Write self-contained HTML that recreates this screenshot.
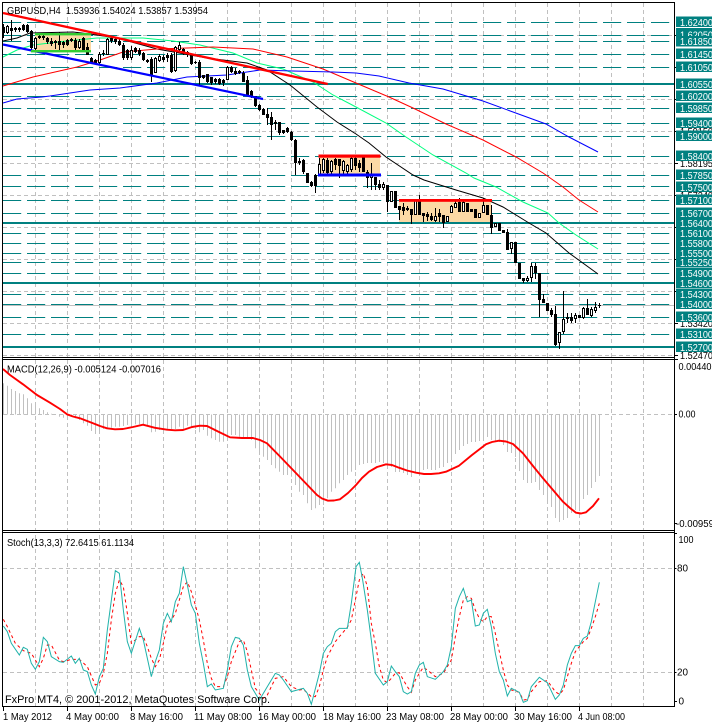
<!DOCTYPE html>
<html><head><meta charset="utf-8"><style>
html,body{margin:0;padding:0;background:#fff;width:712px;height:724px;overflow:hidden}
svg{display:block;filter:blur(.25px)}
text{font-family:"Liberation Sans",sans-serif;font-size:10px;fill:#000}
</style></head><body>
<svg xmlns="http://www.w3.org/2000/svg" width="712" height="724" viewBox="0 0 712 724">
<rect width="712" height="724" fill="#fff"/>
<!-- grid -->
<path fill="none" stroke="#c0c0c0" stroke-width="1" stroke-dasharray="4 3" d="M35.5 3V707M67.5 3V707M99.5 3V707M131.5 3V707M163.5 3V707M195.5 3V707M227.5 3V707M259.5 3V707M291.5 3V707M323.5 3V707M355.5 3V707M387.5 3V707M419.5 3V707M451.5 3V707M483.5 3V707M515.5 3V707M547.5 3V707M579.5 3V707M611.5 3V707M643.5 3V707M3 35.5H674M3 99.5H674M3 131.5H674M3 163.5H674M3 195.5H674M3 227.5H674M3 259.5H674M3 291.5H674M3 323.5H674M3 355.5H674M3 414.5H674M3 568.5H674M3 672.5H674"/>
<path d="M3 305.5H674" stroke="#c0c0c0" stroke-width="1"/>
<!-- levels -->
<path fill="none" stroke="#008080" stroke-width="1" stroke-dasharray="18.2 5.8" d="M3 22.5H670M3 35.5H670M3 41.5H670M3 54.5H670M3 67.5H670M3 96.5H670M3 108.5H670M3 123.5H670M3 136.5H670M3 156.5H670M3 175.5H670M3 186.5H670M3 200.5H670M3 213.5H670M3 233.5H670M3 243.5H670M3 253.5H670M3 262.5H670M3 273.5H670M3 294.5H670M3 304.5H670M3 317.5H670M3 334.5H670"/>
<path stroke="#008080" stroke-width="2" d="M3 84H674M3 223H674M3 283H674M3 347H674"/>
<!-- zones -->
<rect x="35" y="35" width="56" height="16" fill="#fbd9a5"/>
<rect x="319" y="157" width="61" height="17" fill="#fbd9a5"/>
<rect x="399" y="201" width="92" height="21" fill="#fbd9a5"/>
<!-- moving averages -->
<g fill="none" stroke-width="1">
<polyline stroke="#000" points="3,41 17,38 30,33 73,32 90,34 117,38 157,49 207,58 247,63 267,70 290,85 317,107 337,122 356,134 369,143 386,157 413,175 424,180 456,190 483,198 503,207 529,223 546,233 569,253 598,274"/>
<polyline stroke="#00ff7f" points="3,57 17,50 33,45 67,41 97,38 143,38 173,41 200,45 233,53 257,63 283,69 313,82 333,95 356,107 386,123 406,137 433,155 466,173 474,178 496,187 523,202 548,213 559,223 576,235 598,249"/>
<polyline stroke="#f00" points="3,86 33,77 77,67 100,60 123,52 157,49 187,48 213,47 253,49 287,57 323,69 356,83 363,86 389,97 413,108 446,124 483,140 516,157 543,173 563,187 579,200 598,212"/>
<polyline stroke="#00f" points="3,103 17,99 42,97 50,96 90,90 120,88 157,83 187,77 227,75 260,70 293,71 333,72 356,73 379,76 409,83 443,89 483,101 513,112 546,124 569,137 598,152"/>
</g>
<!-- candles: wicks -->
<path fill="none" stroke="#000" stroke-width="1" d="M3.5 24V38M7.5 25V34M11.5 20V41M15.5 27V32M19.5 27V32M23.5 24V31M27.5 24V33M31.5 30V52M35.5 37V50M39.5 35V39M43.5 35V40M47.5 37V44M51.5 38V46M55.5 40V49M59.5 32V50M63.5 41V48M67.5 39V46M71.5 38V42M75.5 38V50M79.5 39V49M83.5 37V52M87.5 43V55M91.5 57V64M95.5 59V64M99.5 52V64M103.5 50V56M107.5 38V55M111.5 37V43M115.5 38V44M119.5 39V46M123.5 43V60M127.5 49V60M131.5 46V60M135.5 47V53M139.5 48V56M143.5 52V61M147.5 59V63M151.5 57V82M155.5 57V73M159.5 54V62M163.5 55V62M167.5 53V62M171.5 53V73M175.5 46V72M179.5 42V52M183.5 48V55M187.5 51V57M191.5 54V65M195.5 61V64M199.5 60V85M203.5 75V79M207.5 74V83M211.5 77V85M215.5 78V84M219.5 78V85M223.5 79V86M227.5 66V80M231.5 66V73M235.5 68V75M239.5 70V74M243.5 71V82M247.5 76V95M251.5 90V98M255.5 96V107M259.5 104V111M263.5 108V115M267.5 108V125M271.5 112V140M275.5 120V130M279.5 122V135M283.5 130V134M287.5 127V133M291.5 131V141M295.5 139V175M299.5 158V165M303.5 159V174M307.5 173V183M311.5 181V187M315.5 174V193M319.5 158V176M323.5 158V173M327.5 158V175M331.5 160V176M335.5 158V170M339.5 159V178M343.5 160V175M347.5 164V176M351.5 157V172M355.5 157V170M359.5 160V172M363.5 155V172M367.5 170V188M371.5 163V190M375.5 177V190M379.5 180V190M383.5 182V190M387.5 185V212M391.5 191V202M395.5 191V208M399.5 206V220M403.5 203V215M407.5 206V211M411.5 209V224M415.5 199V215M419.5 195V215M423.5 213V222M427.5 212V221M431.5 213V221M435.5 208V222M439.5 209V222M443.5 215V228M447.5 216V222M451.5 205V213M455.5 199V208M459.5 198V212M463.5 199V212M467.5 203V212M471.5 209V212M475.5 209V218M479.5 213V218M483.5 198V213M487.5 205V215M491.5 205V234M495.5 223V227M499.5 223V231M503.5 230V233M507.5 229V250M511.5 242V254M515.5 242V263M519.5 263V279M523.5 278V283M527.5 276V282M531.5 263V282M535.5 263V279M539.5 273V317M543.5 294V303M547.5 303V311M551.5 308V317M555.5 306V346M559.5 332V349M563.5 291V334M567.5 313V323M571.5 313V323M575.5 313V323M579.5 315V318M583.5 307V319M587.5 299V315M591.5 307V317M595.5 302V313M599.5 303V308"/>
<!-- candles: bodies -->
<path fill="none" stroke="#000" stroke-width="3" d="M3.5 27V33M7.5 26V33M11.5 28V31M15.5 28V30M19.5 28V30M23.5 25V30M27.5 25V32M31.5 31V48M35.5 38V49M39.5 36V38M43.5 36V38M47.5 38V42M51.5 41V44M55.5 41V43M59.5 41V45M63.5 42V45M67.5 40V45M71.5 39V41M75.5 40V48M79.5 41V48M83.5 38V51M87.5 47V55M91.5 58V63M95.5 60V63M99.5 54V63M103.5 53V54M107.5 39V55M111.5 38V41M115.5 39V42M119.5 41V45M123.5 45V58M127.5 50V58M131.5 50V58M135.5 48V52M139.5 50V54M143.5 53V60M147.5 60V62M151.5 59V75M155.5 58V73M159.5 56V61M163.5 57V60M167.5 55V58M171.5 55V72M175.5 47V71M179.5 45V50M183.5 49V54M187.5 52V55M191.5 55V64M195.5 62V63M199.5 62V78M203.5 75V78M207.5 74V82M211.5 77V83M215.5 79V82M219.5 79V84M223.5 80V83M227.5 67V80M231.5 67V72M235.5 71V74M239.5 71V73M243.5 73V82M247.5 80V95M251.5 91V97M255.5 96V106M259.5 105V110M263.5 109V115M267.5 114V118M271.5 117V125M275.5 122V124M279.5 122V133M283.5 130V133M287.5 128V132M291.5 132V140M295.5 140V163M299.5 161V163M303.5 160V172M307.5 173V183M311.5 182V186M315.5 175V186M319.5 164V175M323.5 159V171M327.5 160V173M331.5 161V172M335.5 159V165M339.5 159V166M343.5 161V171M347.5 165V172M351.5 158V170M355.5 158V166M359.5 163V168M363.5 155V172M367.5 172V178M371.5 174V178M375.5 177V185M379.5 184V188M383.5 184V188M387.5 185V202M391.5 191V202M395.5 191V208M399.5 206V210M403.5 207V211M407.5 208V210M411.5 209V215M415.5 199V215M419.5 199V215M423.5 213V216M427.5 214V217M431.5 216V220M435.5 216V221M439.5 213V217M443.5 215V223M447.5 216V222M451.5 206V213M455.5 203V208M459.5 202V212M463.5 202V212M467.5 203V212M471.5 209V212M475.5 209V218M479.5 213V218M483.5 205V213M487.5 205V215M491.5 215V228M495.5 223V227M499.5 223V231M503.5 230V233M507.5 232V250M511.5 242V249M515.5 242V263M519.5 263V279M523.5 278V281M527.5 278V281M531.5 266V278M535.5 266V273M539.5 273V300M543.5 299V303M547.5 303V311M551.5 310V315M555.5 314V345M559.5 332V343M563.5 319V332M567.5 317V319M571.5 317V321M575.5 315V319M579.5 315V318M583.5 308V318M587.5 308V315M591.5 309V316M595.5 307V311M599.5 305V306"/>
<path fill="none" stroke="#fff" stroke-width="1" d="M7.5 27V32M35.5 39V48M79.5 42V47M99.5 55V62M107.5 40V54M131.5 51V57M155.5 59V72M159.5 57V60M175.5 48V70M179.5 46V49M227.5 68V79M319.5 165V174M323.5 160V170M331.5 162V171M343.5 162V170M347.5 166V171M351.5 159V169M371.5 175V177M383.5 185V187M391.5 192V201M415.5 200V214M435.5 217V220M447.5 217V221M451.5 207V212M455.5 204V207M463.5 203V211M479.5 214V217M483.5 206V212M495.5 224V226M511.5 243V248M527.5 279V280M531.5 267V277M559.5 333V342M563.5 320V331M575.5 316V318M583.5 309V317M591.5 310V315M595.5 308V310"/>
<!-- trend lines and zone borders -->
<path stroke="#f00" stroke-width="2.3" fill="none" d="M3 13L327.7 84"/>
<path stroke="#00f" stroke-width="2.2" fill="none" d="M3 44.5L263 99"/>
<rect x="35" y="33" width="56" height="2.4" fill="#32cd32"/>
<rect x="31" y="50" width="60" height="2.4" fill="#32cd32"/>
<rect x="318.5" y="154.5" width="62" height="3.2" fill="#f00"/>
<rect x="318" y="173.5" width="63" height="3" fill="#00f"/>
<rect x="399" y="199" width="93" height="2.8" fill="#f00"/>
<!-- MACD histogram -->
<path fill="none" stroke="#c0c0c0" stroke-width="1" d="M3.5 414.5V383.3M7.5 414.5V385.7M11.5 414.5V389M15.5 414.5V391M19.5 414.5V393.3M23.5 414.5V394.3M27.5 414.5V398.3M31.5 414.5V403.3M35.5 414.5V405M39.5 414.5V408.3M43.5 414.5V410M47.5 414.5V412.3M51.5 414.5V413.7M59.5 414.5V416.7M63.5 414.5V417.7M67.5 414.5V416.7M71.5 414.5V416.7M75.5 414.5V418.3M79.5 414.5V420M83.5 414.5V423.3M87.5 414.5V425.7M91.5 414.5V431M95.5 414.5V434M99.5 414.5V430M103.5 414.5V429M107.5 414.5V428.3M111.5 414.5V427.7M115.5 414.5V426.7M119.5 414.5V426.7M123.5 414.5V426M127.5 414.5V425M131.5 414.5V424.3M135.5 414.5V424.3M139.5 414.5V424.3M143.5 414.5V424M147.5 414.5V425.7M151.5 414.5V432.3M155.5 414.5V431.7M159.5 414.5V430M163.5 414.5V429M167.5 414.5V430M171.5 414.5V429M175.5 414.5V429M179.5 414.5V426.7M183.5 414.5V429M187.5 414.5V425.7M191.5 414.5V426.7M195.5 414.5V429M199.5 414.5V432.3M203.5 414.5V430M207.5 414.5V435.7M211.5 414.5V438.3M215.5 414.5V440M219.5 414.5V441.7M223.5 414.5V441.7M227.5 414.5V438.3M231.5 414.5V435M235.5 414.5V435M239.5 414.5V436.7M243.5 414.5V437.7M247.5 414.5V437.7M251.5 414.5V440M255.5 414.5V448.3M259.5 414.5V451.7M263.5 414.5V456.7M267.5 414.5V460M271.5 414.5V465M275.5 414.5V468.3M279.5 414.5V471.7M283.5 414.5V475M287.5 414.5V475M291.5 414.5V476.7M295.5 414.5V485M299.5 414.5V491.7M303.5 414.5V495M307.5 414.5V503.3M311.5 414.5V510M315.5 414.5V508.3M319.5 414.5V505M323.5 414.5V505M327.5 414.5V498.3M331.5 414.5V491.7M335.5 414.5V488.3M339.5 414.5V483.3M343.5 414.5V480M347.5 414.5V475M351.5 414.5V471.7M355.5 414.5V470M359.5 414.5V465M363.5 414.5V464M367.5 414.5V463M371.5 414.5V463M375.5 414.5V463M379.5 414.5V462M383.5 414.5V463M387.5 414.5V464M391.5 414.5V467M395.5 414.5V472M399.5 414.5V472M403.5 414.5V473M407.5 414.5V475M411.5 414.5V477M415.5 414.5V472M419.5 414.5V472M423.5 414.5V470M427.5 414.5V469M431.5 414.5V470M435.5 414.5V470M439.5 414.5V468M443.5 414.5V467M447.5 414.5V463M451.5 414.5V459M455.5 414.5V454M459.5 414.5V450M463.5 414.5V446M467.5 414.5V444M471.5 414.5V442M475.5 414.5V442M479.5 414.5V441M483.5 414.5V438M487.5 414.5V437M491.5 414.5V440M495.5 414.5V442M499.5 414.5V442M503.5 414.5V445M507.5 414.5V452M511.5 414.5V453M515.5 414.5V457M519.5 414.5V471M523.5 414.5V480M527.5 414.5V483M531.5 414.5V483M535.5 414.5V482M539.5 414.5V490M543.5 414.5V495M547.5 414.5V502M551.5 414.5V507M555.5 414.5V518M559.5 414.5V522M563.5 414.5V520M567.5 414.5V518M571.5 414.5V513M575.5 414.5V510M579.5 414.5V510M583.5 414.5V499M587.5 414.5V495M591.5 414.5V488M595.5 414.5V482M599.5 414.5V476"/>
<!-- MACD signal -->
<polyline fill="none" stroke="#f00" stroke-width="1.9" stroke-linejoin="round" points="3,369 10,375 23,384.3 37,395 50,402.7 60,409 67,414.3 73,416.5 80,418.3 93,423.3 100,426 107,428.3 115,429.3 123,429 133,427 143,424.7 155,427.8 167,429.7 175,430.3 183,430 192,427 200,425.7 207,426 218,431.5 230,437.3 242,438 253,438 260,440 267,443.3 280,456.5 293,470 305,482.5 317,495 322,498.5 328,500.7 334,500.5 340,499.3 348,493 356,485 362,478 369,471.7 377,467 386,464.3 392,465 399,467.7 407,470.5 416,472.7 424,474 431,474 439,473.3 446,471.7 459,465.7 472,455 486,444.3 492,442 499,440.7 506,441.5 513,444 523,453.3 533,466 543,478.3 553,490 563,501.7 570,508 576,512.7 581,513.5 586,512.3 593,506 599,498.3"/>
<!-- Stochastic -->
<g transform="translate(0,530) scale(.33333)" fill="none" stroke-width="3">
<polyline stroke="#f00" stroke-dasharray="9 9" points="10,268 22,290 46,340 70,362 94,370 106,390 118,410 130,385 142,345 154,345 178,390 190,395 214,388 238,388 262,410 286,465 298,460 310,430 322,370 334,270 346,190 358,150 370,170 382,250 394,340 406,330 418,320 430,320 442,350 454,385 466,410 478,390 490,340 502,285 514,270 526,250 538,210 550,170 562,155 574,185 586,225 598,270 610,330 622,400 634,445 646,470 670,470 682,440 694,395 706,365 718,335 730,330 742,365 754,420 766,475 790,505 802,495 814,470 826,445 850,440 874,470 898,480 910,478 934,500 946,500 958,470 970,420 982,380 1006,335 1018,320 1042,292 1054,270 1068,200 1078,150 1090,130 1102,170 1114,280 1126,340 1138,410 1150,450 1162,458 1174,445 1186,430 1198,428 1210,450 1222,470 1234,487 1246,450 1258,430 1270,412 1282,420 1306,440 1330,430 1354,390 1366,320 1378,260 1390,210 1402,200 1414,205 1426,240 1438,265 1450,275 1462,260 1474,260 1486,310 1498,365 1510,420 1522,465 1534,480 1558,487 1570,510 1582,508 1594,485 1618,455 1642,452 1666,485 1678,493 1690,480 1702,440 1714,400 1726,365 1738,350 1750,335 1762,325 1774,295 1786,260 1798,220"/>
<polyline stroke="#20b2aa" points="10,288 22,305 34,340 58,375 70,352 82,358 94,400 106,418 118,395 130,322 142,335 154,380 178,395 190,397 214,378 226,400 238,385 250,420 262,425 274,465 286,492 298,440 310,415 322,300 346,122 358,130 370,240 382,335 394,370 418,295 430,330 454,440 466,395 478,360 490,280 502,250 514,275 526,215 538,190 550,110 562,165 574,225 586,250 598,340 610,400 622,470 634,462 646,480 670,475 682,420 694,350 706,322 718,325 730,345 742,420 754,470 766,490 778,510 790,490 802,470 826,430 838,435 850,450 874,485 910,475 922,490 934,523 958,430 970,370 982,350 994,340 1006,305 1018,295 1042,295 1054,220 1068,110 1078,97 1088,150 1102,240 1114,330 1126,430 1150,465 1162,455 1174,408 1186,425 1198,440 1210,485 1222,492 1234,485 1246,430 1258,405 1270,397 1282,440 1306,448 1330,425 1342,405 1354,350 1366,235 1378,200 1390,175 1402,215 1414,210 1426,288 1438,285 1450,250 1462,238 1474,290 1486,370 1498,425 1510,450 1522,498 1534,475 1558,487 1570,517 1582,512 1594,470 1618,442 1642,458 1666,508 1678,495 1690,465 1702,405 1714,370 1726,347 1738,347 1750,325 1762,318 1774,275 1786,215 1798,157"/>
</g>
<!-- frames -->
<rect x="3" y="358" width="671" height="1" fill="#fff"/>
<rect x="3" y="531" width="671" height="1" fill="#fff"/>
<path fill="none" stroke="#000" stroke-width="1" d="M2.5 2.5H674.5V706.5H2.5ZM2.5 357.5H674.5M2.5 359.5H674.5M2.5 530.5H674.5M2.5 532.5H674.5"/>
<path fill="none" stroke="#000" stroke-width="1" d="M675 35.5h3M675 67.5h3M675 99.5h3M675 131.5h3M675 163.5h3M675 195.5h3M675 227.5h3M675 259.5h3M675 291.5h3M675 323.5h3M675 355.5h3M675 359.5h3M675 414.5h2M675 523.5h2M675 533.5h2M675 568.5h1.5M675 672.5h1.5M675 701.5h2M3.5 707v4M67.5 707v4M131.5 707v4M195.5 707v4M259.5 707v4M323.5 707v4M387.5 707v4M451.5 707v4M515.5 707v4M579.5 707v4"/>
<!-- scale labels under boxes -->
<text x="680" y="135" textLength="33" lengthAdjust="spacingAndGlyphs">1.59150</text>
<text x="680" y="167" textLength="33" lengthAdjust="spacingAndGlyphs">1.58195</text>
<text x="680" y="199" textLength="33" lengthAdjust="spacingAndGlyphs">1.57240</text>
<text x="680" y="327" textLength="33" lengthAdjust="spacingAndGlyphs">1.53420</text>
<text x="680" y="359" textLength="33" lengthAdjust="spacingAndGlyphs">1.52470</text>
<!-- teal price boxes -->
<g fill="#008080">
<rect x="676" y="16.5" width="36" height="10.5"/><rect x="676" y="28" width="36" height="10.5"/>
<text style="fill:#fff" x="680" y="38.5" textLength="33" lengthAdjust="spacingAndGlyphs">1.62050</text>
<rect x="676" y="36" width="36" height="10.5"/><rect x="676" y="48.5" width="36" height="10.5"/><rect x="676" y="61.5" width="36" height="10.5"/><rect x="676" y="78.5" width="36" height="10.5"/><rect x="676" y="90.5" width="36" height="10.5"/><rect x="676" y="102.5" width="36" height="10.5"/><rect x="676" y="117.5" width="36" height="10.5"/><rect x="676" y="130.5" width="36" height="10.5"/><rect x="676" y="150.5" width="36" height="10.5"/><rect x="676" y="169.5" width="36" height="10.5"/><rect x="676" y="181.5" width="36" height="10.5"/><rect x="676" y="194.5" width="36" height="10.5"/><rect x="676" y="207.5" width="36" height="10.5"/><rect x="676" y="217.5" width="36" height="10.5"/><rect x="676" y="227.5" width="36" height="10.5"/><rect x="676" y="237.5" width="36" height="10.5"/><rect x="676" y="247.5" width="36" height="10.5"/><rect x="676" y="256.5" width="36" height="10.5"/><rect x="676" y="267.5" width="36" height="10.5"/><rect x="676" y="277.5" width="36" height="10.5"/><rect x="676" y="288.5" width="36" height="10.5"/><rect x="676" y="298.5" width="36" height="10.5"/><rect x="676" y="311.5" width="36" height="10.5"/><rect x="676" y="328.5" width="36" height="10.5"/><rect x="676" y="341.5" width="36" height="10.5"/>
</g>
<g>
<text style="fill:#fff" x="680" y="26" textLength="33" lengthAdjust="spacingAndGlyphs">1.62400</text>
<text style="fill:#fff" x="680" y="45" textLength="33" lengthAdjust="spacingAndGlyphs">1.61850</text>
<text style="fill:#fff" x="680" y="58" textLength="33" lengthAdjust="spacingAndGlyphs">1.61450</text>
<text style="fill:#fff" x="680" y="71" textLength="33" lengthAdjust="spacingAndGlyphs">1.61050</text>
<text style="fill:#fff" x="680" y="88" textLength="33" lengthAdjust="spacingAndGlyphs">1.60550</text>
<text style="fill:#fff" x="680" y="100" textLength="33" lengthAdjust="spacingAndGlyphs">1.60200</text>
<text style="fill:#fff" x="680" y="112" textLength="33" lengthAdjust="spacingAndGlyphs">1.59850</text>
<text style="fill:#fff" x="680" y="127" textLength="33" lengthAdjust="spacingAndGlyphs">1.59400</text>
<text style="fill:#fff" x="680" y="140" textLength="33" lengthAdjust="spacingAndGlyphs">1.59000</text>
<text style="fill:#fff" x="680" y="160" textLength="33" lengthAdjust="spacingAndGlyphs">1.58400</text>
<text style="fill:#fff" x="680" y="179" textLength="33" lengthAdjust="spacingAndGlyphs">1.57850</text>
<text style="fill:#fff" x="680" y="191" textLength="33" lengthAdjust="spacingAndGlyphs">1.57500</text>
<text style="fill:#fff" x="680" y="204" textLength="33" lengthAdjust="spacingAndGlyphs">1.57100</text>
<text style="fill:#fff" x="680" y="217" textLength="33" lengthAdjust="spacingAndGlyphs">1.56700</text>
<text style="fill:#fff" x="680" y="227" textLength="33" lengthAdjust="spacingAndGlyphs">1.56400</text>
<text style="fill:#fff" x="680" y="237" textLength="33" lengthAdjust="spacingAndGlyphs">1.56100</text>
<text style="fill:#fff" x="680" y="247" textLength="33" lengthAdjust="spacingAndGlyphs">1.55800</text>
<text style="fill:#fff" x="680" y="257" textLength="33" lengthAdjust="spacingAndGlyphs">1.55500</text>
<text style="fill:#fff" x="680" y="266" textLength="33" lengthAdjust="spacingAndGlyphs">1.55250</text>
<text style="fill:#fff" x="680" y="277" textLength="33" lengthAdjust="spacingAndGlyphs">1.54900</text>
<text style="fill:#fff" x="680" y="287" textLength="33" lengthAdjust="spacingAndGlyphs">1.54600</text>
<text style="fill:#fff" x="680" y="298" textLength="33" lengthAdjust="spacingAndGlyphs">1.54300</text>
<text style="fill:#fff" x="680" y="308" textLength="33" lengthAdjust="spacingAndGlyphs">1.54000</text>
<text style="fill:#fff" x="680" y="321" textLength="33" lengthAdjust="spacingAndGlyphs">1.53600</text>
<text style="fill:#fff" x="680" y="338" textLength="33" lengthAdjust="spacingAndGlyphs">1.53100</text>
<text style="fill:#fff" x="680" y="351" textLength="33" lengthAdjust="spacingAndGlyphs">1.52700</text>
</g>
<!-- indicator axes -->
<text x="678.5" y="370" textLength="33" lengthAdjust="spacingAndGlyphs">0.00440</text>
<text x="678.5" y="417.5" textLength="17" lengthAdjust="spacingAndGlyphs">0.00</text>
<text x="676" y="527" textLength="38" lengthAdjust="spacingAndGlyphs">-0.00959</text>
<text x="678.5" y="543" textLength="15" lengthAdjust="spacingAndGlyphs">100</text>
<text x="677" y="571.5" textLength="11" lengthAdjust="spacingAndGlyphs">80</text>
<text x="677" y="675.5" textLength="11" lengthAdjust="spacingAndGlyphs">20</text>
<text x="678.5" y="704.5">0</text>
<!-- titles -->
<text x="7" y="14" textLength="201" lengthAdjust="spacingAndGlyphs" xml:space="preserve">GBPUSD,H4  1.53936 1.54024 1.53857 1.53954</text>
<text x="7" y="372.5" textLength="154" lengthAdjust="spacingAndGlyphs">MACD(12,26,9) -0.005124 -0.007016</text>
<text x="7" y="546" textLength="127" lengthAdjust="spacingAndGlyphs">Stoch(13,3,3) 72.6415 61.1134</text>
<text x="5" y="703" textLength="265" lengthAdjust="spacingAndGlyphs" style="font-size:11px">FxPro MT4, © 2001-2012, MetaQuotes Software Corp.</text>
<!-- time axis -->
<text x="3" y="720" textLength="49" lengthAdjust="spacingAndGlyphs">1 May 2012</text>
<text x="66" y="720" textLength="53" lengthAdjust="spacingAndGlyphs">4 May 00:00</text>
<text x="130" y="720" textLength="53" lengthAdjust="spacingAndGlyphs">8 May 16:00</text>
<text x="194" y="720" textLength="58" lengthAdjust="spacingAndGlyphs">11 May 08:00</text>
<text x="258" y="720" textLength="58" lengthAdjust="spacingAndGlyphs">16 May 00:00</text>
<text x="323" y="720" textLength="58" lengthAdjust="spacingAndGlyphs">18 May 16:00</text>
<text x="386" y="720" textLength="58" lengthAdjust="spacingAndGlyphs">23 May 08:00</text>
<text x="450" y="720" textLength="58" lengthAdjust="spacingAndGlyphs">28 May 00:00</text>
<text x="514" y="720" textLength="58" lengthAdjust="spacingAndGlyphs">30 May 16:00</text>
<text x="578" y="720" textLength="47" lengthAdjust="spacingAndGlyphs">4 Jun 08:00</text>
</svg>
</body></html>
